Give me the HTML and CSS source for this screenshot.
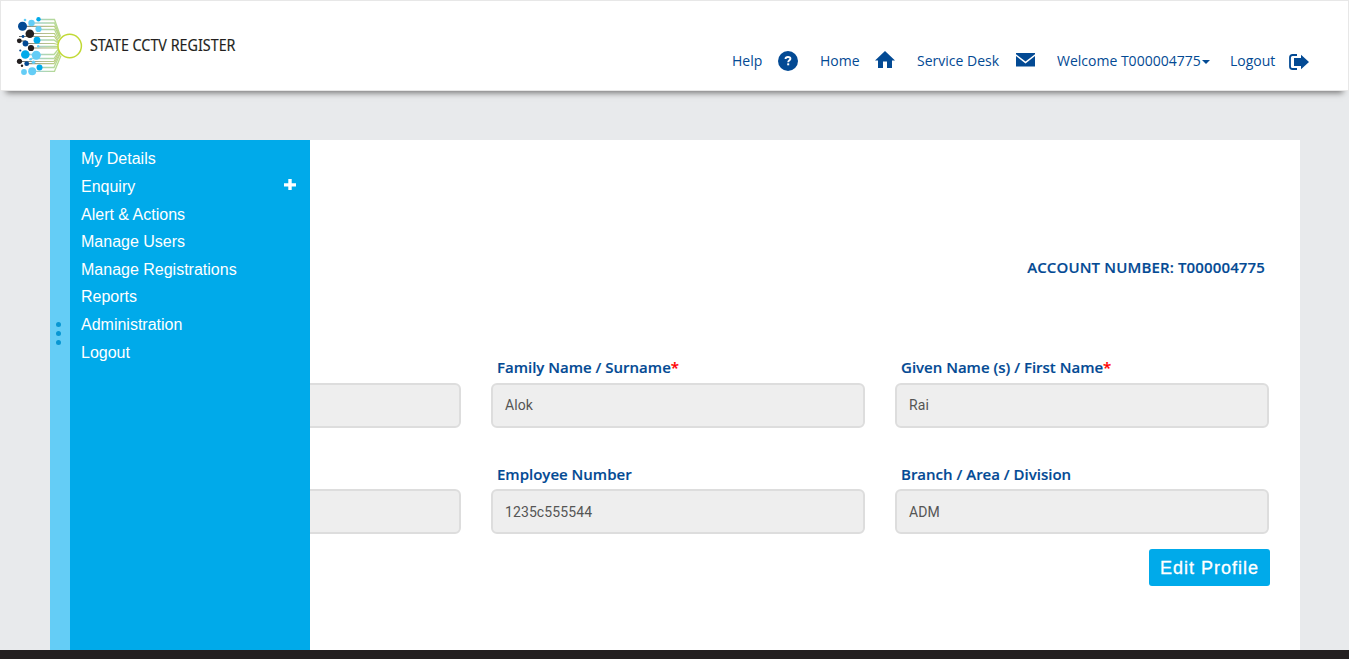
FILE: index.html
```html
<!DOCTYPE html>
<html lang="en">
<head>
<meta charset="utf-8">
<title>State CCTV Register</title>
<link rel="stylesheet" href="styles.css">
</head>
<body>
<div class="page">
  <header class="header">
    <a class="brand">
      <svg class="logo" width="70" height="64" viewBox="14 14 70 64">
        <defs>
          <linearGradient id="wire" gradientUnits="userSpaceOnUse" x1="20" y1="0" x2="64" y2="0">
            <stop offset="0" stop-color="#8ec9e8"/><stop offset=".45" stop-color="#a6d3c6"/><stop offset="1" stop-color="#bfdc7a"/>
          </linearGradient>
          <linearGradient id="wireDark" gradientUnits="userSpaceOnUse" x1="20" y1="0" x2="64" y2="0">
            <stop offset="0" stop-color="#666"/><stop offset=".5" stop-color="#b4ba90"/><stop offset="1" stop-color="#bfdc7a"/>
          </linearGradient>
        </defs>
        <g fill="none" stroke="url(#wire)" stroke-width="1.300">
          <path d="M38 19.500H54.500L60.500 36.500"/>
          <path d="M31 23H54.500L60 37"/>
          <path d="M38 29.500H54.500L59 39"/>
          <path d="M37 40H54L58 43"/>
          <path d="M38 46.500H58V46.600"/>
          <path d="M25 54.500H54L58.500 49"/>
          <path d="M31 58.500H54L59 51"/>
          <path d="M39 67.500H54L60 54"/>
          <path d="M32 71.300H54.500L61 55.500"/>
        </g>
        <g fill="none" stroke="url(#wireDark)" stroke-width="1.200">
          <path d="M22 26.300H54.500L60 38"/>
          <path d="M30 33.500H54.500L58.500 41"/>
          <path d="M19 36.500H54.500L58 42"/>
          <path d="M19 41H26"/>
          <path d="M25 43.500H54L58 44.500"/>
          <path d="M31 48H58"/>
          <path d="M19 61.500H54L59 52"/>
          <path d="M27 63.700H54L60 53"/>
        </g>
        <g fill="#64cdf6">
          <circle cx="25" cy="20" r="1.300"/><circle cx="31.500" cy="23" r="3.200"/><circle cx="38.500" cy="29" r="3.100"/>
          <circle cx="38.200" cy="46.300" r="1.200"/><circle cx="36.300" cy="55.300" r="4.500"/><circle cx="30.600" cy="59.300" r="1.300"/>
          <circle cx="33.500" cy="62.300" r="1.800"/><circle cx="24" cy="72" r="2.900"/><circle cx="32.200" cy="71.200" r="4"/>
        </g>
        <g fill="#00aaea">
          <circle cx="38.500" cy="19.200" r="2.200"/><circle cx="37" cy="40.200" r="3.400"/><circle cx="25.300" cy="54.500" r="4.300"/><circle cx="39.500" cy="67.500" r="3"/>
        </g>
        <g fill="#034a94">
          <circle cx="22.500" cy="26.300" r="4.500"/><circle cx="23" cy="36.500" r="1.400"/><circle cx="25.500" cy="43.500" r="2.900"/>
          <circle cx="20.300" cy="50.500" r="1.100"/><circle cx="26.700" cy="63.700" r="2.400"/>
        </g>
        <g fill="#231f20">
          <circle cx="29.800" cy="33.800" r="4.300"/><circle cx="19.300" cy="40.800" r="2.400"/><circle cx="31" cy="48" r="3.100"/>
          <circle cx="19.500" cy="61.300" r="2.600"/><circle cx="22" cy="65.800" r="1.200"/>
        </g>
        <circle cx="69.700" cy="46" r="11.700" fill="#fff" stroke="#c1d935" stroke-width="1.500"/>
      </svg>
      <svg class="brand-name" width="160" height="36" viewBox="0 0 160 36"><text x="1" y="23" textLength="145.500" lengthAdjust="spacingAndGlyphs">STATE CCTV REGISTER</text></svg>
    </a>
    <nav class="nav">
      <a class="nav-link nav-help"><span>Help</span>
        <svg width="20" height="20" viewBox="0 0 20 20"><circle cx="10" cy="10" r="10" fill="#034a94"/><path d="M7.500 8C7.600 6.600 8.500 6 10 6C11.500 6 12.400 6.700 12.400 7.800C12.400 9.300 10.300 9.400 10.200 11.200" fill="none" stroke="#fff" stroke-width="1.900"/><path d="M9.200 12.300h2v2H9.200z" fill="#fff"/></svg>
      </a>
      <a class="nav-link nav-home"><span>Home</span>
        <svg class="icon-home" width="20" height="18" viewBox="0 0 20 18"><path d="M10 0L20 9.500H17V17H12V10.500H8V17H3V9.500H0Z" fill="#034a94"/></svg>
      </a>
      <a class="nav-link nav-desk"><span>Service Desk</span>
        <svg class="icon-mail" width="19" height="14" viewBox="0 0 19 14"><path d="M0 0H19V1.200L9.500 8.600L0 1.200ZM0 3L9.500 10.400L19 3V13.500H0Z" fill="#034a94"/></svg>
      </a>
      <a class="nav-link nav-user"><span>Welcome T000004775</span><i class="caret"></i></a>
      <a class="nav-link nav-logout"><span>Logout</span>
        <svg class="icon-out" width="20" height="16" viewBox="0 0 20 16"><path d="M8 1H3.500Q1 1 1 3.500V12.500Q1 15 3.500 15H8" fill="none" stroke="#034a94" stroke-width="1.800"/><path d="M5 4H12V.7L20 8L12 15.300V12H5Z" fill="#034a94"/></svg>
      </a>
    </nav>
  </header>
  <main class="panel">
    <aside class="sidebar">
      <div class="handle"><i></i><i></i><i></i></div>
      <ul class="menu">
        <li>My Details</li>
        <li>Enquiry <svg width="12" height="12" viewBox="0 0 12 12"><path d="M4.300 0h3.400v4.200H12v3.200H7.700V11H4.300V7.400H0V4.200h4.300z" fill="#fff"/></svg></li>
        <li>Alert &amp; Actions</li>
        <li>Manage Users</li>
        <li>Manage Registrations</li>
        <li>Reports</li>
        <li>Administration</li>
        <li>Logout</li>
      </ul>
    </aside>
    <div class="account">ACCOUNT NUMBER: T000004775</div>
    <form class="fields">
      <div class="field name"><div class="label"></div><div class="input"></div></div>
      <div class="field name"><div class="label">Family Name / Surname<b>*</b></div><div class="input">Alok</div></div>
      <div class="field name"><div class="label">Given Name (s) / First Name<b>*</b></div><div class="input">Rai</div></div>
      <div class="field work"><div class="label"></div><div class="input"></div></div>
      <div class="field work"><div class="label">Employee Number</div><div class="input">1235c555544</div></div>
      <div class="field work"><div class="label">Branch / Area / Division</div><div class="input">ADM</div></div>
    </form>
    <button class="edit" type="button">Edit Profile</button>
  </main>
  <footer class="footer"></footer>
</div>
</body>
</html>
```
FILE: styles.css
```css
* { box-sizing: border-box; }
body { margin: 0; font-family: "Open Sans", sans-serif; background: #e8eaec; }
.page { height: 659px; overflow: hidden; display: flex; flex-direction: column; }

.header {
  height: 91px; flex: none; display: flex; justify-content: space-between;
  background: #fff; border: 1px solid #e7e7e7;
  box-shadow: 0 8px 6px -6px #777;
}
.brand { display: flex; padding: 13px 0 0 13px; }
.logo { display: block; }
.brand-name { display: block; margin: 14px 0 0 5px; overflow: visible; }
.brand-name text { font: 16px "Noto Sans", sans-serif; fill: #231f20; stroke: #231f20; stroke-width: .15px; }

.nav { display: flex; align-items: flex-start; padding: 50px 39px 0 0; color: #034a94; font-size: 14px; line-height: 20px; }
.nav-link { display: flex; justify-content: space-between; white-space: nowrap; }
.nav-help { width: 66px; margin-right: 22px; }
.nav-home { width: 75px; margin-right: 22px; }
.nav-desk { width: 118px; margin-right: 22px; }
.nav-user { width: 153px; margin-right: 20px; }
.nav-logout { width: 79px; }
.icon-home { margin-top: 0; }
.icon-mail { margin-top: 2px; }
.icon-out { margin-top: 3px; }
.caret { width: 8px; height: 4px; margin-top: 9px; border: 4px solid transparent; border-top-color: #034a94; border-bottom: 0; }

.panel { position: relative; flex: none; width: 1250px; height: 510px; margin: 49px 0 0 50px; background: #fff; }
.sidebar { position: absolute; left: 0; top: 0; width: 260px; height: 100%; display: flex; background: #00aaea; z-index: 2; }
.handle { width: 20px; background: #64cdf6; display: flex; flex-direction: column; align-items: center; gap: 4px; padding: 182px 3px 0 0; }
.handle i { width: 5px; height: 5px; border-radius: 50%; background: #0897d3; }
.menu { flex: 1; list-style: none; margin: 0; padding: 5.35px 14px 0 11px; font: 16px "Liberation Sans", Arial, sans-serif; color: #fff; }
.menu li { height: 27.6px; line-height: 27.6px; display: flex; justify-content: space-between; }
.menu svg { margin-top: 6.100px; }

.account { padding: 116px 35px 0 0; height: 206px; text-align: right; font-size: 15px; font-weight: 600; letter-spacing: .14px; line-height: 22px; color: #034a94; -webkit-text-stroke: .15px; }
.fields { display: grid; grid-template-columns: repeat(3, 374px); gap: 16px 30px; padding-left: 37px; }
.field { height: 90px; padding-top: 11px; }
.label { height: 26px; padding-left: 6px; line-height: 22px; font-size: 15px; font-weight: 600; color: #034a94; white-space: nowrap; -webkit-text-stroke: .15px; }
.name .label { line-height: 20px; }
.label b { color: #f00; font-weight: 600; }
.input { height: 45px; padding: 0 12px; border: 2px solid #ddd; border-radius: 6px; background: #eee; color: #555; font: 14px/40px Roboto, sans-serif; letter-spacing: .1px; }
.work .input { line-height: 42px; }
.edit {
  display: block; width: 121px; height: 37px; margin: 7px 30px 0 auto; padding: 1px 0 0;
  border: 0; border-radius: 3px; background: #00aaea; color: #fff;
  font: 18px "Liberation Sans", Arial, sans-serif; letter-spacing: 1px; -webkit-text-stroke: .3px;
}
.footer { flex: 1; background: #231f20; }
```
